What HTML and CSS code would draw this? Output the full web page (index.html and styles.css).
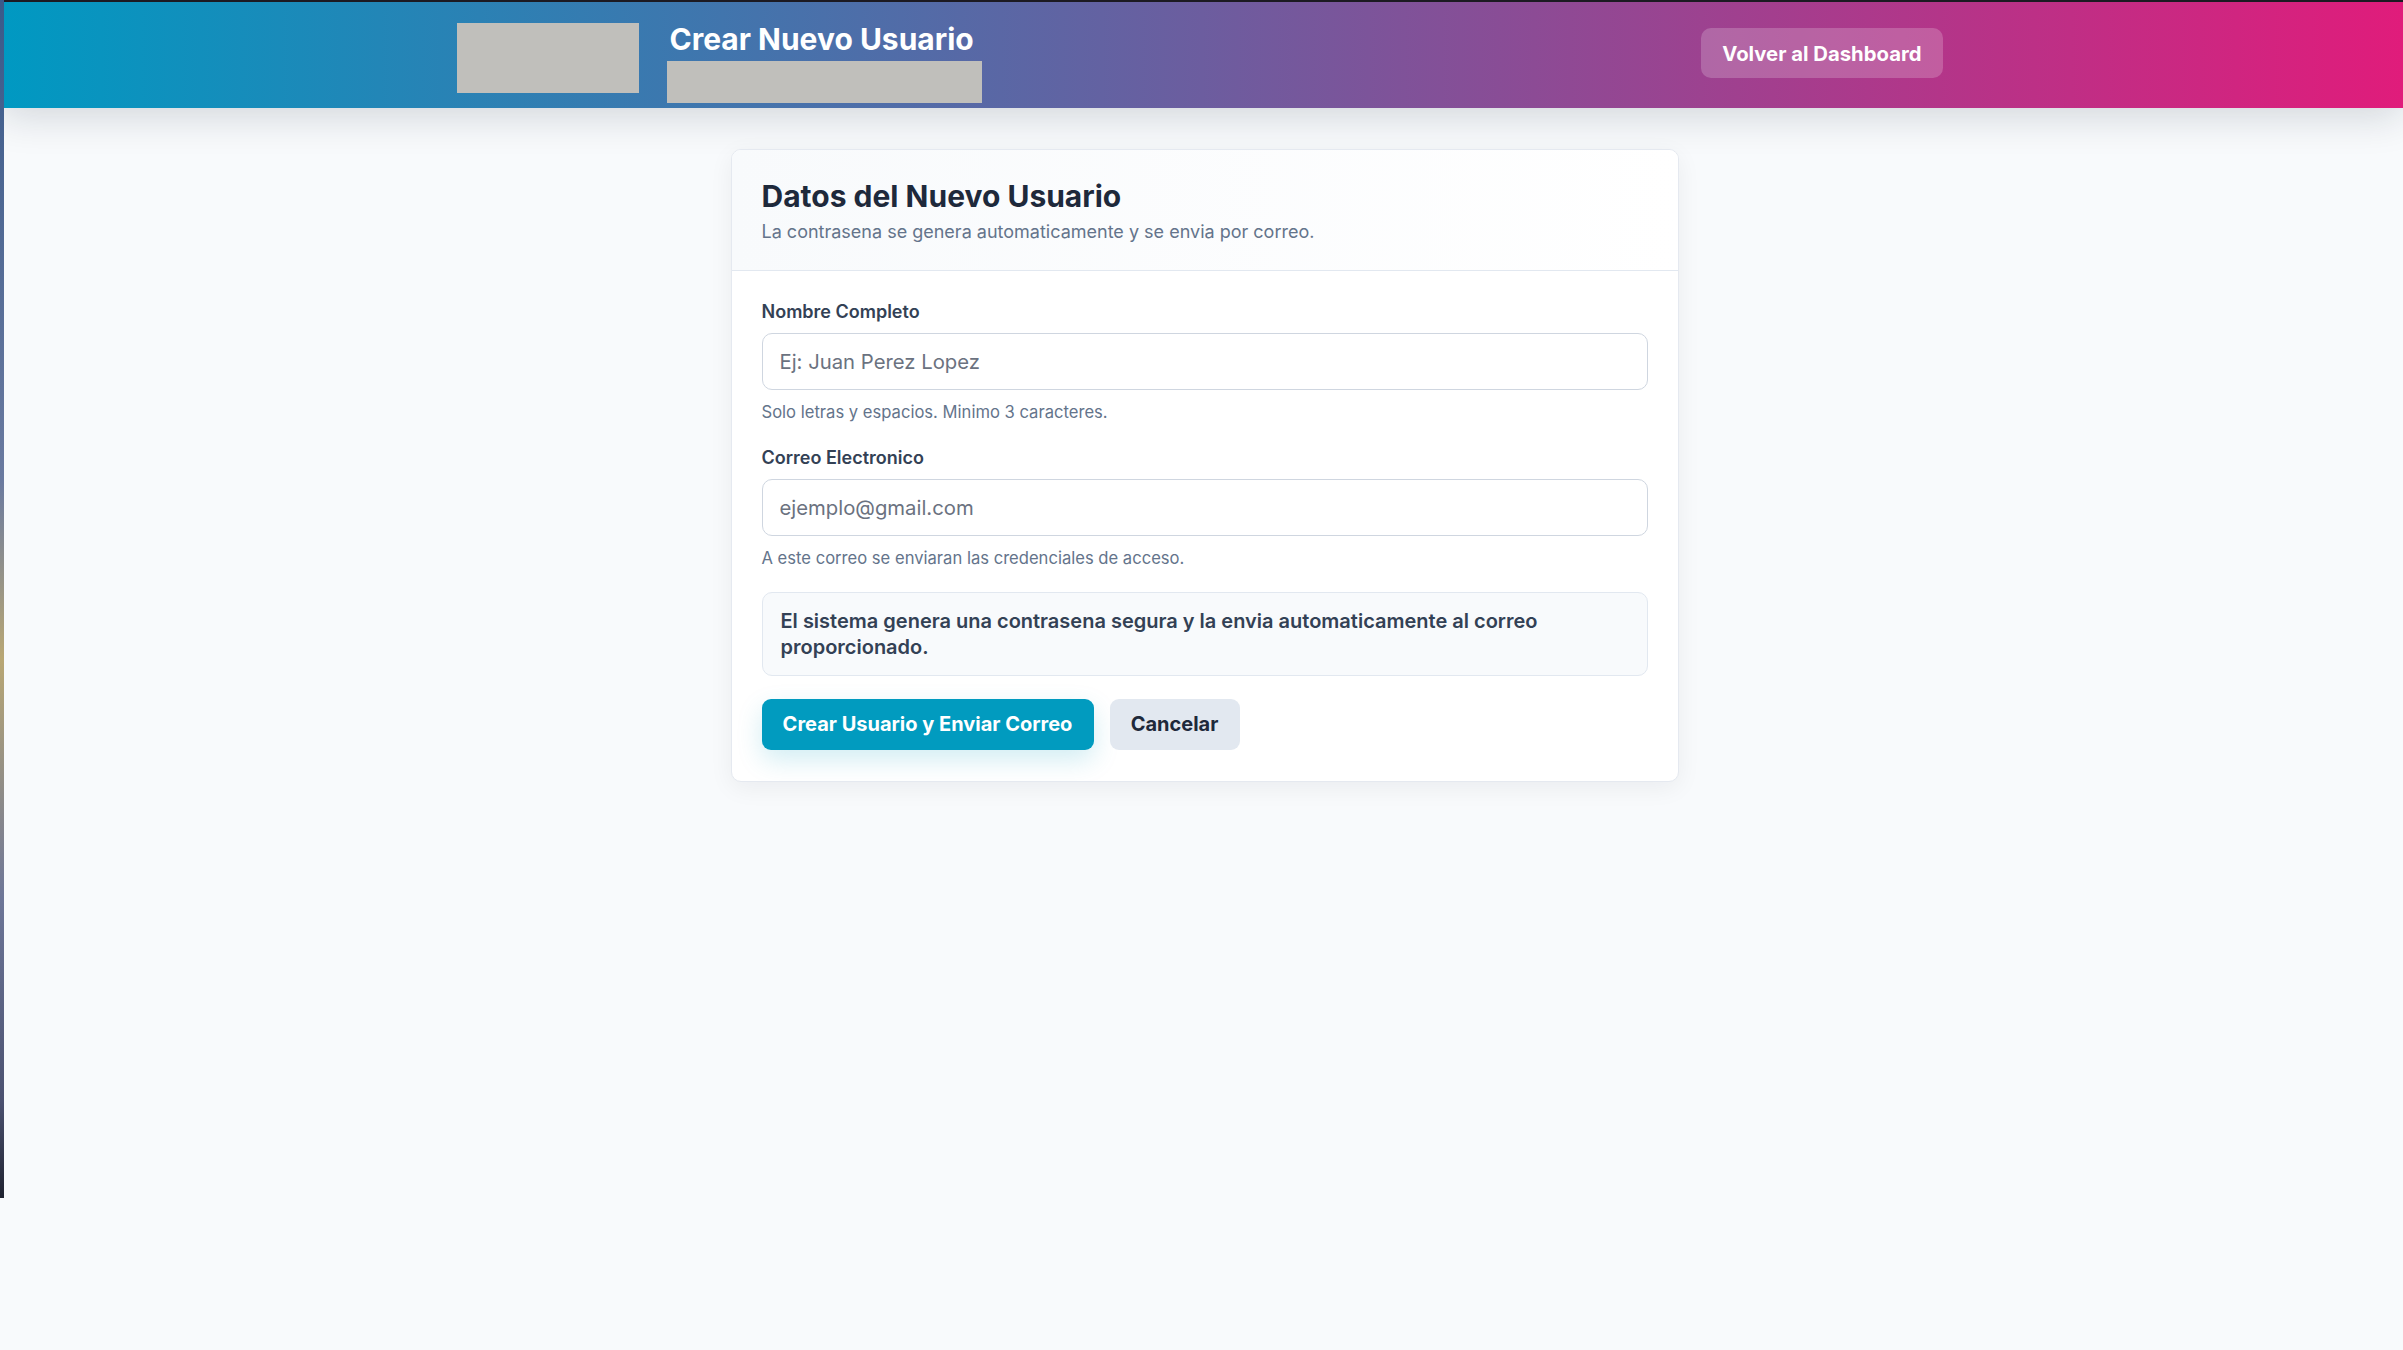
FILE: index.html
```html
<!DOCTYPE html>
<html>
<head>
    <title>Crear Nuevo Usuario</title>
    <link rel="stylesheet" href="styles.css">
</head>
<body>
    <header class="topbar">
        <div class="topbar-inner">
            <div class="brand">
                <div class="logo-box"></div>
                <div class="brand-text">
                    <h1 class="page-title">Crear Nuevo Usuario</h1>
                    <div class="subtitle-box"></div>
                </div>
            </div>
            <a href="#" class="back-button">Volver al Dashboard</a>
        </div>
    </header>

    <main class="content">
        <section class="card">
            <div class="card-header">
                <h2 class="card-title">Datos del Nuevo Usuario</h2>
                <p class="card-subtitle">La contrasena se genera automaticamente y se envia por correo.</p>
            </div>

            <form class="card-body" id="user-form">
                <div class="field">
                    <label for="nombre" class="field-label">Nombre Completo</label>
                    <input type="text" id="nombre" class="field-input" placeholder="Ej: Juan Perez Lopez">
                    <span class="field-hint">Solo letras y espacios. Minimo 3 caracteres.</span>
                </div>

                <div class="field">
                    <label for="correo" class="field-label">Correo Electronico</label>
                    <input type="email" id="correo" class="field-input" placeholder="ejemplo@gmail.com">
                    <span class="field-hint">A este correo se enviaran las credenciales de acceso.</span>
                </div>

                <div class="info-box">
                    El sistema genera una contrasena segura y la envia automaticamente al correo proporcionado.
                </div>

                <div class="actions">
                    <button type="submit" class="btn btn-primary">Crear Usuario y Enviar Correo</button>
                    <button type="button" class="btn btn-secondary">Cancelar</button>
                </div>
            </form>
        </section>
    </main>
</body>
</html>
```

FILE: styles.css
```css
* {
    box-sizing: border-box;
}

body {
    margin: 0;
    min-height: 100vh;
    background-color: #f8fafc;
    font-family: Inter, "Liberation Sans", sans-serif;
    color: #1e293b;
}

/* thin strip along the left edge */
body::before {
    content: "";
    position: fixed;
    left: 0;
    top: 0;
    width: 4px;
    height: 1198px;
    background: linear-gradient(180deg, #3a5a8a 0%, #6a7aa0 40%, #b9a774 55%, #6d7698 75%, #4b5170 92%, #1f2230 100%);
    z-index: 5;
}

.topbar {
    height: 108px;
    padding-right: 4px;
    border-top: 2px solid #1c1a22;
    background: linear-gradient(90deg, #0099c2 0%, #6c5d9f 50%, #e01c7b 100%);
    box-shadow: 0 8px 40px rgba(15, 23, 42, 0.16);
}

.topbar-inner {
    max-width: 1486px;
    margin: 0 auto;
    padding-top: 19px;
    display: flex;
    align-items: flex-start;
    justify-content: space-between;
}

.brand {
    display: flex;
    align-items: flex-start;
    gap: 28px;
}

.logo-box {
    width: 182px;
    height: 70px;
    margin-top: 2px;
    background-color: #c0bfbb;
}

.brand-text {
    display: flex;
    flex-direction: column;
}

.page-title {
    margin: 0 0 4px 3px;
    font-size: 30px;
    font-weight: 700;
    line-height: 36px;
    color: #ffffff;
}

.subtitle-box {
    width: 315px;
    height: 42px;
    background-color: #c0bfbb;
}

.back-button {
    display: inline-flex;
    align-items: center;
    height: 50px;
    margin-top: 7px;
    padding: 0 21px;
    border-radius: 10px;
    background-color: rgba(255, 255, 255, 0.2);
    color: #ffffff;
    font-size: 20.3px;
    font-weight: 700;
    text-decoration: none;
}

.content {
    display: flex;
    justify-content: center;
    padding-top: 41px;
    padding-left: 6px;
}

.card {
    width: 948px;
    background-color: #ffffff;
    border: 1px solid #e5e9f0;
    border-radius: 10px;
    box-shadow: 0 6px 24px rgba(15, 23, 42, 0.06);
    overflow: hidden;
}

.card-header {
    padding: 27px 30px 28px;
    background: linear-gradient(90deg, #f8fafc, #ffffff);
    border-bottom: 1px solid #e2e8f0;
}

.card-title {
    margin: 0;
    font-size: 30px;
    font-weight: 700;
    line-height: 38px;
    color: #1e293b;
}

.card-subtitle {
    margin: 6px 0 0;
    font-size: 18px;
    color: #64748b;
}

.card-body {
    padding: 30px 30px 31px;
}

.field {
    display: flex;
    flex-direction: column;
    margin-bottom: 24.5px;
}

.field-label {
    font-size: 18px;
    font-weight: 600;
    color: #334155;
    margin-bottom: 11px;
}

.field-input {
    height: 57px;
    padding: 0 17px;
    border: 1.5px solid #cfd6e0;
    border-radius: 10px;
    font-family: inherit;
    font-size: 20.3px;
    color: #1e293b;
    background-color: #ffffff;
}

.field-input::placeholder {
    color: #6b7280;
}

.field-hint {
    margin-top: 12px;
    font-size: 16.6px;
    color: #64748b;
}

.info-box {
    padding: 15px 18px;
    background-color: #f8fafc;
    border: 1.5px solid #e2e8f0;
    border-radius: 10px;
    font-size: 20px;
    font-weight: 600;
    line-height: 26px;
    color: #334155;
}

.actions {
    display: flex;
    gap: 16px;
    margin-top: 22.5px;
}

.btn {
    height: 51px;
    border: none;
    border-radius: 9px;
    font-family: inherit;
    font-size: 20px;
    font-weight: 700;
    white-space: nowrap;
    cursor: pointer;
}

.btn-primary {
    width: 332px;
    background-color: #019bbf;
    color: #ffffff;
    box-shadow: 0 10px 26px rgba(1, 155, 191, 0.18);
}

.btn-secondary {
    width: 130px;
    background-color: #e2e8f0;
    color: #1e293b;
}
```
